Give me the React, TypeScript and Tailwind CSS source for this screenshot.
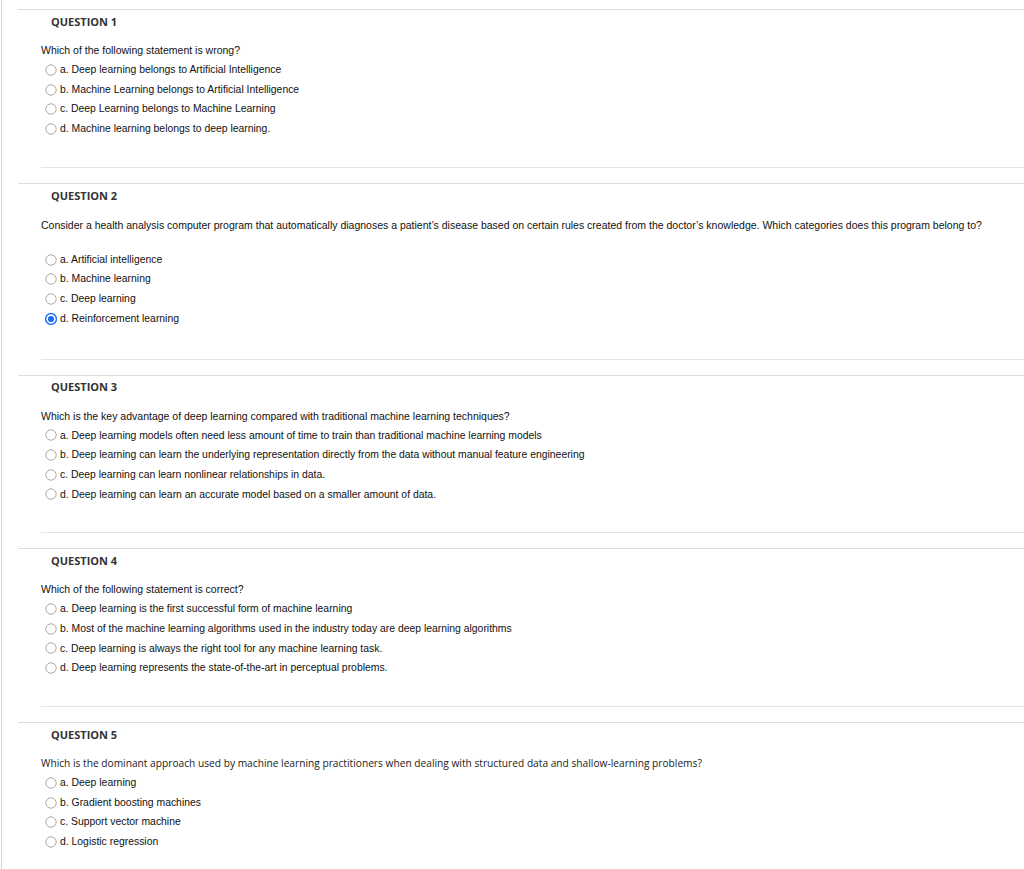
const QUESTIONS = [
  {
    n: 1,
    text: 'Which of the following statement is wrong?',
    options: [
      'Deep learning belongs to Artificial Intelligence',
      'Machine Learning belongs to Artificial Intelligence',
      'Deep Learning belongs to Machine Learning',
      'Machine learning belongs to deep learning.',
    ],
  },
  {
    n: 2,
    text: "Consider a health analysis computer program that automatically diagnoses a patient\u2019s disease based on certain rules created from the doctor\u2019s knowledge. Which categories does this program belong to?",
    spaced: true,
    selected: 3,
    options: ['Artificial intelligence', 'Machine learning', 'Deep learning', 'Reinforcement learning'],
  },
  {
    n: 3,
    text: 'Which is the key advantage of deep learning compared with traditional machine learning techniques?',
    options: [
      'Deep learning models often need less amount of time to train than traditional machine learning models',
      'Deep learning can learn the underlying representation directly from the data without manual feature engineering',
      'Deep learning can learn nonlinear relationships in data.',
      'Deep learning can learn an accurate model based on a smaller amount of data.',
    ],
  },
  {
    n: 4,
    text: 'Which of the following statement is correct?',
    options: [
      'Deep learning is the first successful form of machine learning',
      'Most of the machine learning algorithms used in the industry today are deep learning algorithms',
      'Deep learning is always the right tool for any machine learning task.',
      'Deep learning represents the state-of-the-art in perceptual problems.',
    ],
  },
  {
    n: 5,
    text: 'Which is the dominant approach used by machine learning practitioners when dealing with structured data and shallow-learning problems?',
    openSans: true,
    options: ['Deep learning', 'Gradient boosting machines', 'Support vector machine', 'Logistic regression'],
  },
];

const LETTERS = ['a', 'b', 'c', 'd'];

function Radio({ checked }: { checked: boolean }) {
  return checked ? (
    <svg width="12" height="12" viewBox="0 0 12 12" className="shrink-0">
      <circle cx="6" cy="6" r="5.4" fill="#fff" stroke="#1a6ff0" strokeWidth="1.4" />
      <circle cx="6" cy="6" r="3.1" fill="#1a6ff0" />
    </svg>
  ) : (
    <svg width="12" height="12" viewBox="0 0 12 12" className="shrink-0">
      <circle cx="6" cy="6" r="5.2" fill="#fff" stroke="#a0a0a0" strokeWidth="0.9" />
    </svg>
  );
}

export default function App() {
  return (
    <div className="min-h-[869px] bg-white ml-px border-l border-[#d4d4d4] pt-[9px] font-['Liberation_Sans',Arial,sans-serif] text-[10.4px] text-[#111]">
      {QUESTIONS.map((q) => (
        <div key={q.n} className="ml-4 mb-[15px] border-t border-[#dcdcdc]">
          {/* Header */}
          <div className="h-[24px] pl-[33px] flex items-center font-['Open_Sans',sans-serif] font-bold text-[11px] text-[#333]">
            QUESTION {q.n}
          </div>

          <div className={`ml-[23px] border-b border-[#e3e3e3] ${q.spaced ? 'pb-[30px]' : 'pb-[28px]'}`}>
            <p
              className={`${q.spaced ? 'mt-[7px] mb-[15px]' : 'mt-[6px]'} leading-[20px] ${
                q.openSans ? "font-['Open_Sans',sans-serif] text-[10.2px] text-[#222]" : 'text-[10.5px]'
              }`}
            >
              {q.text}
            </p>

            {q.options.map((opt, i) => (
              <div key={i} className="h-[19.7px] flex items-center gap-[3px] pl-[4px]">
                <Radio checked={q.selected === i} />
                <span className="whitespace-nowrap">
                  {LETTERS[i]}. {opt}
                </span>
              </div>
            ))}
          </div>
        </div>
      ))}
    </div>
  );
}
